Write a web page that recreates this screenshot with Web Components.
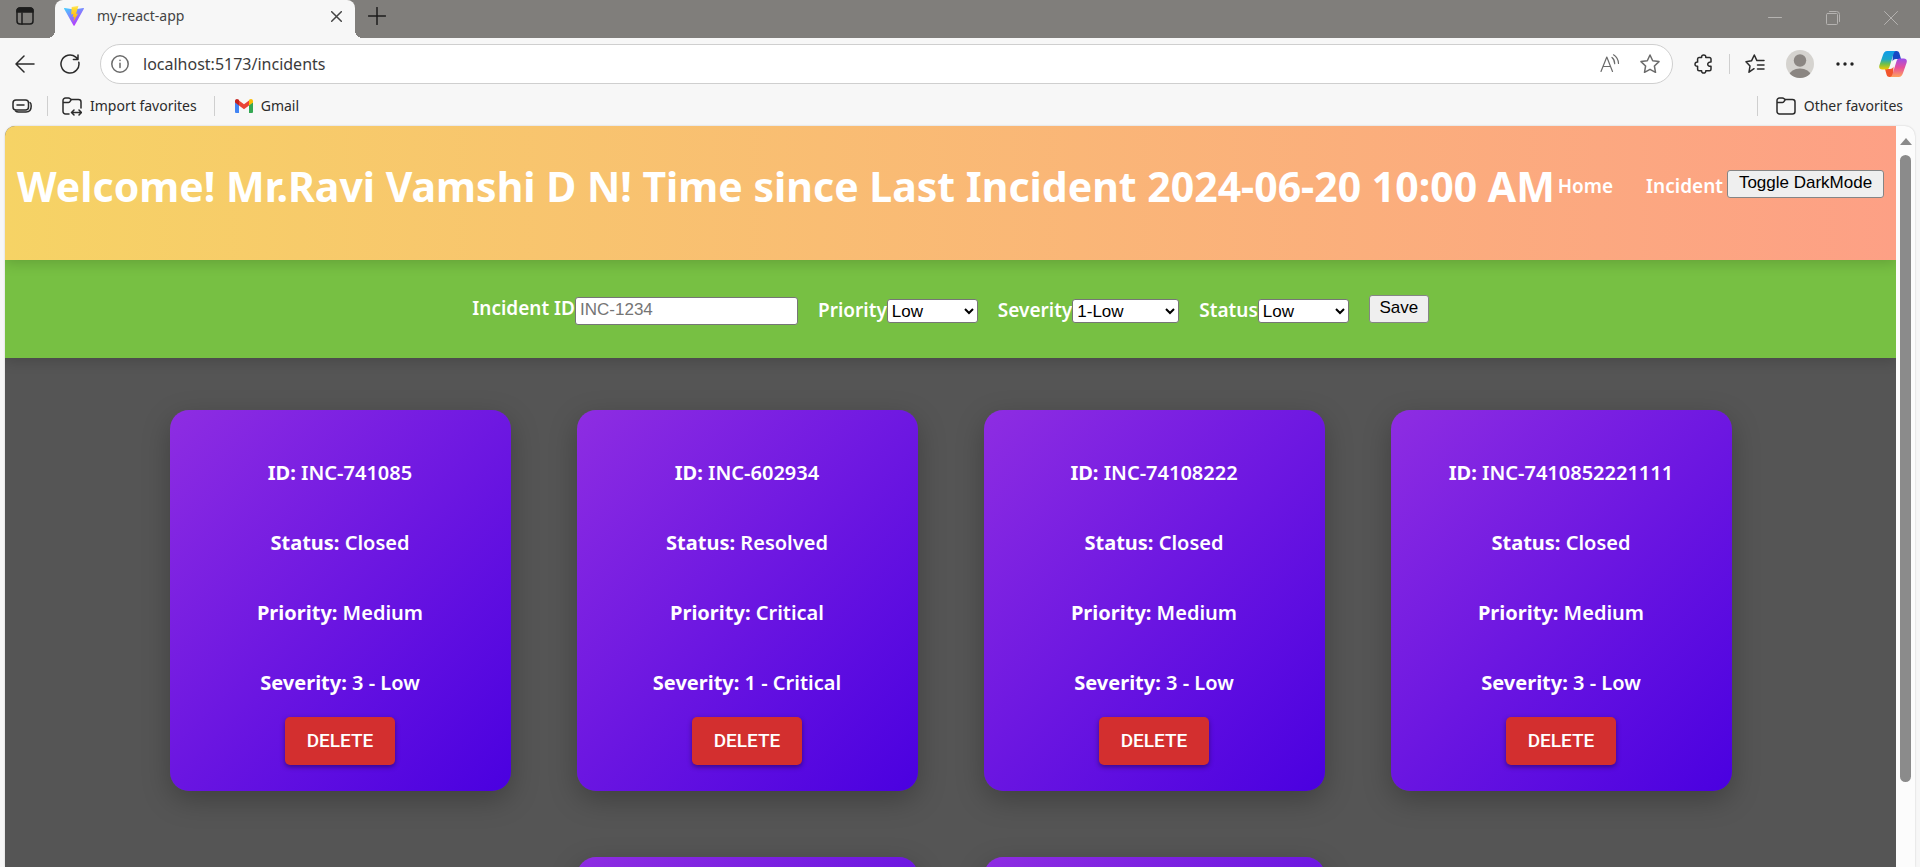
<!DOCTYPE html>
<html lang="en">
<head>
<meta charset="utf-8">
<title>my-react-app</title>
<style>
html, body { height: 100%; }
body { margin: 0; display: flex; flex-direction: column; overflow: hidden; background: #f7f7f7; font-family: "Noto Sans", sans-serif; font-size: 14px; color: #2b2b2b; }
</style>
</head>
<body>
<tab-strip><browser-tab>my-react-app</browser-tab></tab-strip>
<tool-bar></tool-bar>
<favorites-bar></favorites-bar>
<page-frame>
  <app-header heading="Welcome! Mr.Ravi Vamshi D N! Time since Last Incident 2024-06-20 10:00 AM"></app-header>
  <incident-form></incident-form>
  <incident-grid>
    <incident-card incident="INC-741085" status="Closed" priority="Medium" severity="3 - Low"></incident-card>
    <incident-card incident="INC-602934" status="Resolved" priority="Critical" severity="1 - Critical"></incident-card>
    <incident-card incident="INC-74108222" status="Closed" priority="Medium" severity="3 - Low"></incident-card>
    <incident-card incident="INC-7410852221111" status="Closed" priority="Medium" severity="3 - Low"></incident-card>
    <incident-card></incident-card>
    <incident-card></incident-card>
  </incident-grid>
</page-frame>
<script>
const base = `
  :host, *, *::before { box-sizing: border-box; }
  .icon { display: flex; align-items: center; justify-content: center; padding: 0; border: 0; background: none; color: inherit; flex: none; }
  svg { display: block; fill: none; stroke: currentColor; stroke-width: 1.5; stroke-linecap: round; stroke-linejoin: round; }
`;
function define(name, css, html) {
  customElements.define(name, class extends HTMLElement {
    constructor() {
      super();
      this.attachShadow({ mode: 'open' });
    }
    connectedCallback() {
      const body = typeof html === 'function' ? html(this) : html;
      this.shadowRoot.innerHTML = `<style>${base}${css}</style>${body}`;
    }
  });
}

define('tab-strip', `
  :host { display: flex; align-items: stretch; height: 38px; flex: none; background: #807e7b; color: #1c1c1c; }
  .menu { width: 50px; }
  .new { width: 43px; height: 32px; }
  .window { margin-left: auto; display: flex; color: #b5b3b1; }
  .window .icon { width: 58px; height: 35px; }
  .menu svg { margin-bottom: 6px; }
`, `
  <button class="icon menu" aria-label="Tab actions"><svg width="18" height="18" viewBox="0 0 18 18"><rect x="1" y="1" width="16" height="16" rx="3"/><path d="M1 5V4a3 3 0 0 1 3-3h10a3 3 0 0 1 3 3v1z" fill="currentColor"/><path d="M6 6v11"/></svg></button>
  <slot></slot>
  <button class="icon new" aria-label="New tab"><svg width="18" height="18" viewBox="0 0 18 18"><path d="M9 0.5v17M0.5 9h17"/></svg></button>
  <div class="window">
    <button class="icon" aria-label="Minimize"><svg width="14" height="14" viewBox="0 0 14 14"><path d="M0.5 6.5h13" stroke-width="1"/></svg></button>
    <button class="icon" aria-label="Restore"><svg width="14" height="14" viewBox="0 0 14 14"><g stroke-width="1"><rect x="0.5" y="2.5" width="11" height="11" rx="1"/><path d="M3.5 0.5h7a3 3 0 0 1 3 3v7"/></g></svg></button>
    <button class="icon" aria-label="Close window"><svg width="14" height="14" viewBox="0 0 14 14"><path d="M0.5 0.5l13 13M13.5 0.5l-13 13" stroke-width="1"/></svg></button>
  </div>
`);

define('browser-tab', `
  :host { position: relative; display: flex; align-items: flex-start; width: 300px; margin-left: 5px; padding: 4px 13px 0 9px; background: #f7f7f7; border-radius: 8px 8px 0 0; color: #444; }
  :host::before, :host::after { content: ""; position: absolute; bottom: 0; width: 8px; height: 8px; }
  :host::before { left: -8px; background: radial-gradient(circle at 0 0, #0000 8px, #f7f7f7 8px); }
  :host::after { right: -8px; background: radial-gradient(circle at 100% 0, #0000 8px, #f7f7f7 8px); }
  .title { flex: 1; padding-left: 13px; line-height: 24px; }
  .logo { margin-top: 1px; }
  .icon { height: 24px; width: 12px; }
`, `
  <svg class="logo" width="20" height="22" viewBox="0 0 20 22" style="stroke:none">
    <defs><linearGradient id="v" x1="0" y1="0" x2=".6" y2="1"><stop offset="0" stop-color="#41d1ff"/><stop offset="1" stop-color="#bd34fe"/></linearGradient>
    <linearGradient id="b" x1="0" y1="0" x2="0" y2="1"><stop offset="0" stop-color="#ffea83"/><stop offset=".15" stop-color="#ffdd35"/><stop offset="1" stop-color="#ffa800"/></linearGradient></defs>
    <path fill="url(#v)" d="M19.9 3.7L10.6 20.4a.6.6 0 0 1-1.1 0L.1 3.7a.6.6 0 0 1 .6-.8L10 4.5l9.3-1.6a.6.6 0 0 1 .6.8z"/>
    <path fill="url(#b)" d="M14.5.7L7.700 2l-.5 7.500 2.100-.4-.6 3.200 1.700-.5-1.100 5 4.800-8.200-2.100.4z"/>
  </svg>
  <span class="title"><slot></slot></span>
  <button class="icon" aria-label="Close tab"><svg width="11" height="11" viewBox="0 0 11 11"><path d="M0.700 0.700l9.600 9.600M10.300 0.700l-9.600 9.600"/></svg></button>
`);

define('tool-bar', `
  :host { display: flex; align-items: center; height: 51px; flex: none; padding: 0 13px 0 15px; }
  .icon { width: 20px; height: 20px; }
  .reload { margin: 0 20px 0 25px; }
  .address { flex: 1; display: flex; align-items: center; height: 40px; padding: 0 12px 0 9px; border: 1px solid #cfcfcf; border-radius: 20px; background: #fff; color: #6b6b6b; }
  input { flex: 1; min-width: 0; margin-left: 13px; padding: 0; border: 0; background: none; font: 16px/24px "Noto Sans", sans-serif; color: #3b3b3b; outline: 0; }
  .star { margin-left: 20px; }
  .tools { display: flex; align-items: center; margin-left: 21px; }
  .rule { width: 1px; height: 20px; margin: 0 15px; background: #cfcfcf; }
  .avatar { width: 28px; height: 28px; margin: 0 21px; }
  .copilot { width: 28px; height: 28px; margin-left: 24px; }
`, `
  <button class="icon" aria-label="Back"><svg width="20" height="18" viewBox="0 0 20 18"><path d="M19 9H1M9 1L1 9l8 8"/></svg></button>
  <button class="icon reload" aria-label="Refresh"><svg width="20" height="20" viewBox="0 0 20 20"><path d="M18.800 8.200A9 9 0 1 1 15.800 3.100L18 5.200M18 1v4.600h-4.600"/></svg></button>
  <div class="address">
    <button class="icon" aria-label="Site information"><svg width="18" height="18" viewBox="0 0 18 18"><circle cx="9" cy="9" r="8.200"/><path d="M9 8.300v4.200M9 5.300v.2"/></svg></button>
    <input aria-label="Address" value="localhost:5173/incidents">
    <button class="icon" aria-label="Read aloud"><svg width="20" height="19" viewBox="0 0 20 19"><path stroke-width="1.200" d="M1 17.500L6.800 3l5.700 14.500M3 12.500h7.600M12 3.500c1.700 1.400 2.700 3.600 2.700 6.200M13.500 .8c2.900 1.800 4.800 4.500 5 8.700"/></svg></button>
    <button class="icon star" aria-label="Add to favorites"><svg width="20" height="20" viewBox="0 0 20 20"><path d="M10 1l2.700 5.700 6.300.9-4.600 4.400 1.100 6.300L10 15.300l-5.500 3 1.100-6.300L1 7.600l6.300-.9z"/></svg></button>
  </div>
  <div class="tools">
    <button class="icon" aria-label="Extensions"><svg width="20" height="20" viewBox="0 0 20 20"><path d="M5 3.500h2.600C7.500 1.800 8.400 1 9.700 1s2.200.8 2.100 2.500h3.700a1.500 1.500 0 0 1 1.500 1.500v3.100c-2-.2-3.300.6-3.300 2.100s1.300 2.300 3.300 2.100v2.900a1.500 1.500 0 0 1-1.500 1.500h-3.700c.1 1.600-.8 2.400-2.100 2.400s-2.200-.8-2.100-2.400H5.100a1.500 1.500 0 0 1-1.500-1.500v-2.900C1.800 12.400 1 11.500 1 10.200S1.800 8 3.600 8.100V5A1.500 1.500 0 0 1 5 3.500z"/></svg></button>
    <span class="rule"></span>
    <button class="icon" aria-label="Favorites"><svg width="20" height="20" viewBox="0 0 20 20"><path d="M9 14.700l-5 3.500 1-6.200L1 7.700l5.500-.9L9.300 1l2.600 5.600H19M12.500 11H19M12.500 15H19"/></svg></button>
    <button class="icon avatar" aria-label="Profile"><svg width="28" height="28" viewBox="0 0 28 28" style="stroke:none"><defs><clipPath id="c"><circle cx="14" cy="14" r="14"/></clipPath></defs><circle cx="14" cy="14" r="14" fill="#d5d3cf"/><g clip-path="url(#c)" fill="#8b8682"><circle cx="14" cy="10.500" r="6.200"/><ellipse cx="14" cy="25" rx="10.500" ry="6.500"/></g></svg></button>
    <button class="icon" aria-label="Settings and more"><svg width="18" height="4" viewBox="0 0 18 4" style="stroke:none;fill:#222"><circle cx="2" cy="2" r="1.700"/><circle cx="9" cy="2" r="1.700"/><circle cx="16" cy="2" r="1.700"/></svg></button>
    <button class="icon copilot" aria-label="Copilot"><svg width="28" height="26" viewBox="0 0 28 26" style="stroke:none">
      <defs><linearGradient id="l" x1="0" y1="0" x2="0" y2="1"><stop offset="0" stop-color="#0f9bea"/><stop offset=".45" stop-color="#1ea8c8"/><stop offset=".7" stop-color="#6fc04a"/><stop offset="1" stop-color="#f5c800"/></linearGradient>
      <linearGradient id="r" x1="0" y1="0" x2="0" y2="1"><stop offset="0" stop-color="#9b4dea"/><stop offset=".5" stop-color="#e84f9a"/><stop offset="1" stop-color="#ffa35c"/></linearGradient></defs>
      <path fill="#1748c4" d="M14 0h3.500c1.500 0 2.400.7 2.900 2.200L22 8h-5c-2 0-3 1-3.500 2.500z"/>
      <path fill="#f2552c" d="M14 26h-3.500c-1.500 0-2.400-.7-2.900-2.200L6 18h5c2 0 3-1 3.500-2.500z"/>
      <path fill="url(#l)" d="M17.500 0H8.300C5.800 0 4.600 1.800 3.800 4.500L.5 14c-1 3 .3 4.500 2.700 4.500h4.300c1.700 0 2.400-.9 3-2.700L14.500 3c.6-2 1.400-3 3-3z"/>
      <path fill="url(#r)" d="M10.500 26h9.200c2.500 0 3.700-1.800 4.500-4.500L27.500 12c1-3-.3-4.500-2.700-4.500h-4.300c-1.700 0-2.400.9-3 2.700L13.500 23c-.6 2-1.400 3-3 3z"/>
    </svg></button>
  </div>
`);

define('favorites-bar', `
  :host { display: flex; align-items: center; height: 34px; flex: none; padding: 0 17px 0 12px; margin-bottom: 3px; }
  .rule { width: 1px; height: 20px; background: #cfcfcf; }
  a { display: flex; align-items: center; gap: 8px; color: inherit; text-decoration: none; line-height: 20px; }
  .first { margin: 0 14px 0 15px; }
  .second { margin: 0 20px 0 17px; }
  .last { margin: 0 18px 0 auto; }
`, `
  <button class="icon" aria-label="Collections"><svg width="20" height="14" viewBox="0 0 20 14"><rect x="1" y="1" width="15.500" height="10" rx="3"/><path d="M5 6h7M18 3.500c1 .8 1.200 1.500 1.200 3.500 0 4-1.700 6-5.200 6H6.500c-1.500 0-2.200-.3-3-1"/></svg></button>
  <span class="rule first"></span>
  <a href="#import"><svg width="20" height="19" viewBox="0 0 20 19"><path d="M7 17H3.500A2.500 2.500 0 0 1 1 14.500v-11A2.500 2.500 0 0 1 3.500 1h3c1.500 0 1.800 1.500 3 1.500h7A2.500 2.500 0 0 1 19 5v6M1 5.500h5.500c1.500 0 1.700-1.500 2.700-2.800M10 15.500h9M12 13l-2.500 2.500L12 18M17 13l2.500 2.500L17 18"/></svg>Import favorites</a>
  <span class="rule second"></span>
  <a href="#gmail"><svg width="18" height="14" viewBox="0 0 18 14" style="stroke:none"><path fill="#4285f4" d="M0 3v10a1 1 0 0 0 1 1h3V6z"/><path fill="#34a853" d="M18 3v10a1 1 0 0 1-1 1h-3V6z"/><path fill="#ea4335" d="M4 1.500l5 3.800 5-3.800v5L9 10.300 4 6.500z"/><path fill="#c5221f" d="M0 2.200C0 .2 2 -.6 3.500.6L4 1v5.500L0 3.500z"/><path fill="#fbbc04" d="M18 2.200c0-2-2-2.800-3.500-1.600L14 1v5.500l4-3z"/></svg>Gmail</a>
  <span class="rule last"></span>
  <a href="#other"><svg width="20" height="18" viewBox="0 0 20 18"><path d="M1 14.500v-11A2.500 2.500 0 0 1 3.500 1h3c1.500 0 1.800 1.500 3 1.500h7A2.500 2.500 0 0 1 19 5v9.500a2.500 2.500 0 0 1-2.500 2.500h-13A2.500 2.500 0 0 1 1 14.500zM1 5.500h5.500c1.500 0 1.700-1.500 2.700-2.800"/></svg>Other favorites</a>
`);

define('page-frame', `
  :host { display: flex; flex: 1; min-height: 0; margin: 0 5px; border-radius: 10px 10px 0 0; overflow: hidden; background: #fcfcfc; box-shadow: 0 0 2px #0003; }
  .view { flex: 1; min-width: 0; overflow: hidden; background: #555; }
  .scroll { display: flex; flex-direction: column; align-items: center; width: 19px; padding-top: 12px; flex: none; }
  .arrow { border: 6px solid transparent; border-top: 0; border-bottom: 7px solid #8b8b8b; margin-bottom: 10px; flex: none; }
  .thumb { width: 11px; height: 88%; border-radius: 6px; background: #8b8b8b; }
  .track { flex: 1; display: flex; min-height: 0; }
`, `
  <div class="view"><slot></slot></div>
  <div class="scroll"><span class="arrow"></span><div class="track"><div class="thumb"></div></div></div>
`);

define('app-header', `
  :host { position: relative; display: flex; justify-content: space-between; align-items: center; padding: 29px 12px 43px; background: linear-gradient(90deg, #f6d365, #fda085); box-shadow: 0 4px 12px #00000026; color: #fff; }
  h1 { margin: 0; font-size: 41px; line-height: 62px; font-weight: 700; white-space: nowrap; }
  nav { display: flex; align-items: center; font-size: 19px; line-height: 28px; font-weight: 600; }
  a { color: inherit; text-decoration: none; }
  a + a { margin: 0 4px 0 33px; }
  button { width: 157px; height: 28px; padding: 0 0 3px; margin-bottom: 4px; border: 1px solid #858585; border-radius: 3px; background: #efefef; color: #000; font: 17px/20px "Liberation Sans", sans-serif; white-space: nowrap; }
`, host => `
  <h1>${host.getAttribute('heading')}</h1>
  <nav><a href="#home">Home</a><a href="#incident">Incident</a><button>Toggle DarkMode</button></nav>
`);

define('incident-form', `
  :host { display: block; background: #77c043; box-shadow: 0 4px 12px #00000026; color: #fff; }
  form { display: flex; justify-content: center; align-items: center; gap: 20px; height: 98px; }
  .field { display: flex; align-items: center; padding-top: 4px; }
  label { font-size: 19px; line-height: 28px; font-weight: 600; margin-bottom: 2px; }
  .id label { margin-bottom: 6px; }
  input, select, button { border: 1px solid #767676; border-radius: 3px; font: 17px/20px "Liberation Sans", sans-serif; background: #fff; color: #000; }
  input { width: 223px; height: 28px; padding: 0 4px 3px; }
  input::placeholder { color: #757575; }
  select { width: 91px; height: 24px; padding: 0; }
  .wide select { width: 107px; }
  button { width: 60px; height: 28px; padding: 0 0 3px; background: #efefef; border-color: #858585; }
`, `
  <form onsubmit="return false">
    <div class="field id"><label for="incident">Incident ID</label><input id="incident" placeholder="INC-1234"></div>
    <div class="field"><label for="priority">Priority</label><select id="priority"><option>Low</option><option>Medium</option><option>Critical</option></select></div>
    <div class="field wide"><label for="severity">Severity</label><select id="severity"><option>1-Low</option><option>2-Medium</option></select></div>
    <div class="field"><label for="status">Status</label><select id="status"><option>Low</option><option>Closed</option></select></div>
    <button>Save</button>
  </form>
`);

define('incident-grid', `
  :host { display: flex; flex-wrap: wrap; justify-content: center; gap: 66px; padding: 52px 20px; }
`, `<slot></slot>`);

define('incident-card', `
  :host { display: flex; flex-direction: column; align-items: center; width: 341px; min-height: 381px; padding: 28px 26px 26px; border-radius: 19px; background: linear-gradient(135deg, #8e2de2, #4a00e0); box-shadow: 0 9px 28px #00000040; color: #fff; }
  p { margin: 20px 0; font-size: 20px; line-height: 30px; font-weight: 600; white-space: nowrap; }
  p:last-of-type { margin-bottom: 19px; }
  strong { font-weight: 700; }
  button { width: 110px; height: 48px; padding: 0; border: 0; border-radius: 5px; background: #d32f2f; color: #fff; font: 500 19px/32px Roboto, sans-serif; box-shadow: 0 2px 5px #0006; }
`, host => host.hasAttribute('incident') ? `
  <p><strong>ID:</strong> ${host.getAttribute('incident')}</p>
  <p><strong>Status:</strong> ${host.getAttribute('status')}</p>
  <p><strong>Priority:</strong> ${host.getAttribute('priority')}</p>
  <p><strong>Severity:</strong> ${host.getAttribute('severity')}</p>
  <button>DELETE</button>
` : '');
</script>
</body>
</html>
